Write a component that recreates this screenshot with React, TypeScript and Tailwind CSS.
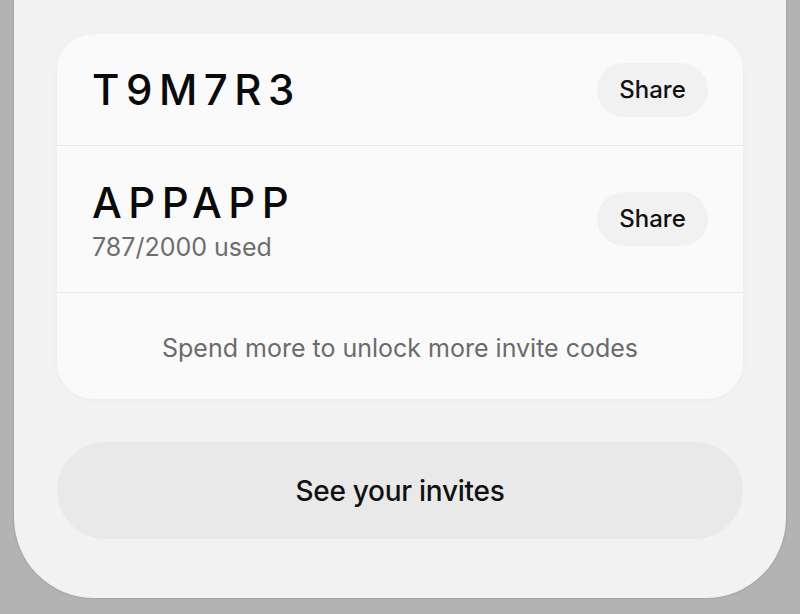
import React from "react";

const font = { fontFamily: "Inter, 'Noto Sans', sans-serif" };

function ShareButton() {
  return (
    <button className="h-[54px] w-[111px] shrink-0 rounded-full bg-[#f1f1f1] text-[24px] font-medium leading-none text-[#111]">
      Share
    </button>
  );
}

export default function App() {
  return (
    <div className="h-[614px] w-[800px] overflow-hidden bg-[#b3b3b3]" style={font}>
      <div className="mx-[14px] flex h-[598px] flex-col rounded-b-[80px] bg-[#f2f2f2] px-[43px] pt-[34px] shadow-[0_0_2px_rgba(0,0,0,0.25)]">
        {/* Codes card */}
        <div className="flex flex-col rounded-[36px] bg-[#fafafa] shadow-[0_1px_6px_rgba(0,0,0,0.03)]">
          <div className="flex h-[112px] items-center justify-between border-b border-[#e6e6e6] px-[35px]">
            <span className="text-[42px] font-medium leading-none tracking-[0.155em] text-[#0a0a0a]">T9M7R3</span>
            <ShareButton />
          </div>
          <div className="flex h-[147px] items-center justify-between border-b border-[#e6e6e6] px-[35px]">
            <div className="flex flex-col gap-[11px] pt-[4px]">
              <span className="text-[42px] font-medium leading-none tracking-[0.155em] text-[#0a0a0a]">APPAPP</span>
              <span className="text-[25px] leading-none text-[#6e6e6e]">787/2000 used</span>
            </div>
            <ShareButton />
          </div>
          <div className="flex h-[106px] items-center justify-center pt-1">
            <span className="text-[25px] leading-none text-[#6b6b6b]">Spend more to unlock more invite codes</span>
          </div>
        </div>

        <button className="mt-[43px] h-[97px] w-full rounded-full bg-[#e9e9e9] text-[28px] font-medium leading-none tracking-[-0.01em] text-[#111]">
          See your invites
        </button>
      </div>
    </div>
  );
}
